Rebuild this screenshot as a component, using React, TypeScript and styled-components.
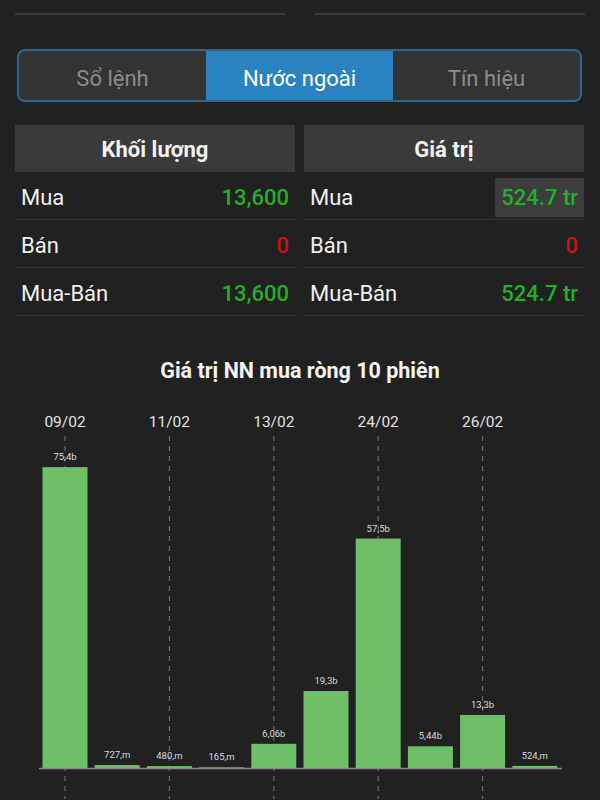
import * as React from "react"
import styled, { createGlobalStyle } from "styled-components"

const GlobalStyle = createGlobalStyle`
    html, body {
        margin: 0;
        padding: 0;
        background: #212121;
        font-family: Roboto, "Liberation Sans", sans-serif;
    }
`

const Page = styled.div`
    width: 600px;
    height: 800px;
    overflow: hidden;
    background: #212121;
    display: flex;
    flex-direction: column;
`

// two input underlines, the fields themselves are scrolled off the top
const InputsRow = styled.div`
    display: flex;
    justify-content: space-between;
    padding: 0 15px 0 15px;
    height: 15px;
`
const InputLine = styled.div`
    width: 270px;
    height: 13px;
    border-bottom: 2px solid #3a3a3a;
`

const Segmented = styled.div`
    margin: 34px 18px 0 17px;
    height: 49px;
    border: 2px solid #2c6690;
    border-radius: 8px;
    overflow: hidden;
    display: flex;
    background: #333333;
`
const Segment = styled.div<{ $active?: boolean }>`
    flex: 1;
    display: flex;
    align-items: center;
    justify-content: center;
    padding-top: 5px;
    font-size: 22px;
    color: ${p => p.$active ? "#ffffff" : "#8c8c8c"};
    background: ${p => p.$active ? "#2a82c1" : "transparent"};
`

const Tables = styled.div`
    display: flex;
    gap: 9px;
    margin: 23px 16px 0 15px;
`
const Table = styled.div`
    flex: 1;
    display: flex;
    flex-direction: column;
`
const TableHead = styled.div`
    height: 47px;
    padding-top: 2px;
    box-sizing: border-box;
    background: #3a3a3a;
    color: #f2f2f2;
    font-size: 22px;
    font-weight: 700;
    display: flex;
    align-items: center;
    justify-content: center;
`
const Row = styled.div`
    box-sizing: border-box;
    height: 48px;
    padding-top: 4px;
    border-bottom: 1px solid #363636;
    display: flex;
    align-items: center;
    justify-content: space-between;
    padding-left: 6px;
`
const Label = styled.span`
    color: #f0f0f0;
    font-size: 22px;
`
const Value = styled.span<{ $color: string, $flash?: boolean }>`
    color: ${p => p.$color};
    font-size: 22px;
    font-weight: 500;
    height: 39px;
    display: flex;
    align-items: center;
    padding: 0 6px 0 6px;
    background: ${p => p.$flash ? "#3d3d3d" : "transparent"};
`

const ChartTitle = styled.div`
    margin-top: 42px;
    height: 26px;
    line-height: 26px;
    text-align: center;
    color: #f4f4f4;
    font-size: 21.5px;
    font-weight: 700;
`
const ChartBox = styled.div`
    margin-top: 15px;
    height: 400px;
`

const GREEN = "#22b02a"
const RED = "#cc1111"

interface Side {
    title: string,
    buy: string,
    sell: string,
    net: string,
    flashBuy?: boolean,
}

const sides: Side[] = [
    { title: "Khối lượng", buy: "13,600", sell: "0", net: "13,600" },
    { title: "Giá trị", buy: "524.7 tr", sell: "0", net: "524.7 tr", flashBuy: true },
]

const bars = [
    { date: "09/02", v: 75.4, label: "75,4b" },
    { date: "", v: 0.727, label: "727,m" },
    { date: "11/02", v: 0.48, label: "480,m" },
    { date: "", v: 0.165, label: "165,m" },
    { date: "13/02", v: 6.06, label: "6,06b" },
    { date: "", v: 19.3, label: "19,3b" },
    { date: "24/02", v: 57.5, label: "57,5b" },
    { date: "", v: 5.44, label: "5,44b" },
    { date: "26/02", v: 13.3, label: "13,3b" },
    { date: "", v: 0.524, label: "524,m" },
]

const BarChart = () => {
    const base = 369
    const scale = 3.99
    const step = 52.2
    const first = 65
    const w = 45
    return <svg width="600" height="400">
        {bars.map((b, i) => b.date ?
            <g key={"d" + i}>
                <text x={first + i * step} y={28} fill="#e2e2e2" fontSize="15.5"
                    textAnchor="middle" fontFamily="Roboto, sans-serif">{b.date}</text>
                <line x1={first + i * step} x2={first + i * step} y1={37} y2={400}
                    stroke="#6a6a6a" strokeWidth="1.2" strokeDasharray="5 5" />
            </g> : null
        )}
        {bars.map((b, i) => {
            const h = Math.max(b.v * scale, 0.6)
            const cx = first + i * step
            return <g key={"b" + i}>
                <rect x={cx - w / 2} y={base - h} width={w} height={h} fill="#6fbf68" />
                <text x={cx} y={base - h - 7} fill="#dcdcdc" fontSize="9.5"
                    textAnchor="middle" fontFamily="Roboto, sans-serif">{b.label}</text>
            </g>
        })}
        <line x1={39} x2={562} y1={base + 0.5} y2={base + 0.5} stroke="#8a8a8a" strokeWidth="1.6" />
    </svg>
}

const App = () =>
<Page>
    <GlobalStyle />
    <InputsRow>
        <InputLine />
        <InputLine />
    </InputsRow>
    <Segmented>
        <Segment>Sổ lệnh</Segment>
        <Segment $active>Nước ngoài</Segment>
        <Segment>Tín hiệu</Segment>
    </Segmented>
    <Tables>
        {sides.map((s, i) =>
            <Table key={i}>
                <TableHead>{s.title}</TableHead>
                <Row><Label>Mua</Label><Value $color={GREEN} $flash={s.flashBuy}>{s.buy}</Value></Row>
                <Row><Label>Bán</Label><Value $color={RED}>{s.sell}</Value></Row>
                <Row><Label>Mua-Bán</Label><Value $color={GREEN}>{s.net}</Value></Row>
            </Table>
        )}
    </Tables>
    <ChartTitle>Giá trị NN mua ròng 10 phiên</ChartTitle>
    <ChartBox>
        <BarChart />
    </ChartBox>
</Page>

export default App
